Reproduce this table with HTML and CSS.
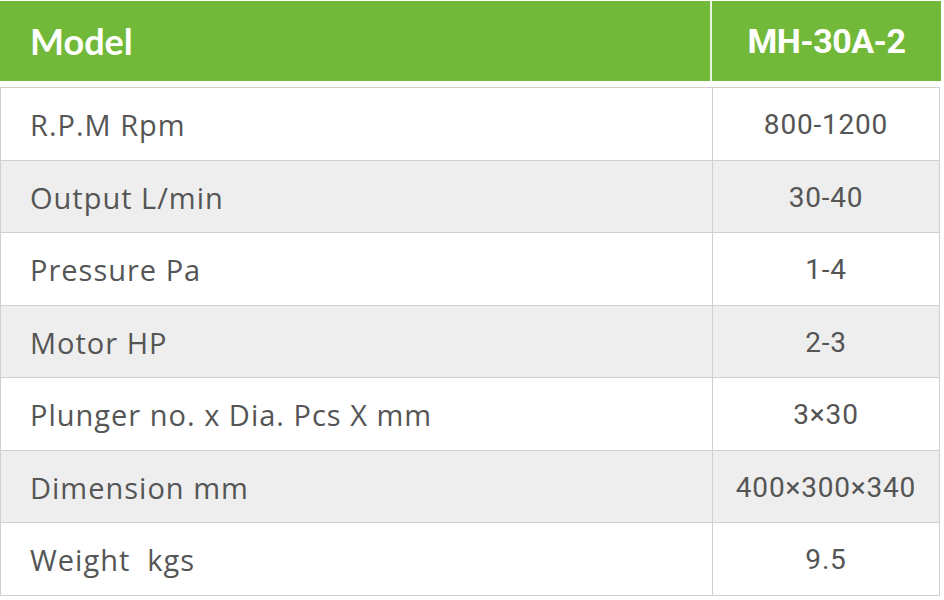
FILE: index.html
```html
<!DOCTYPE html>
<html>
<head>
<meta charset="utf-8">
<link rel="stylesheet" href="styles.css">
</head>
<body>
<div class="spec">
  <div class="head">
    <div class="head-label">Model</div>
    <div class="head-value">MH-30A-2</div>
  </div>
  <table class="grid">
    <tr><td class="label">R.P.M Rpm</td><td class="value">800-1200</td></tr>
    <tr class="alt"><td class="label">Output L/min</td><td class="value">30-40</td></tr>
    <tr><td class="label">Pressure Pa</td><td class="value">1-4</td></tr>
    <tr class="alt"><td class="label">Motor HP</td><td class="value">2-3</td></tr>
    <tr><td class="label">Plunger no. x Dia. Pcs X mm</td><td class="value">3×30</td></tr>
    <tr class="alt"><td class="label">Dimension mm</td><td class="value">400×300×340</td></tr>
    <tr><td class="label">Weight&nbsp; kgs</td><td class="value">9.5</td></tr>
  </table>
</div>
</body>
</html>
```
FILE: styles.css
```css
html, body {
  margin: 0;
  padding: 0;
  background: #ffffff;
}
.spec {
  width: 941px;
  padding-top: 1px;
}
.head {
  display: flex;
  height: 80px;
  background: #72b93a;
}
.head-label {
  width: 712px;
  box-sizing: border-box;
  padding-left: 30px;
  display: flex;
  align-items: center;
  color: #ffffff;
  font-family: "Lato", sans-serif;
  font-weight: 700;
  font-size: 36px;
  border-right: 2px solid #e9f3e0;
}
.head-value {
  flex: 1;
  display: flex;
  align-items: center;
  justify-content: center;
  color: #ffffff;
  font-family: "Roboto", sans-serif;
  font-weight: 700;
  font-size: 34px;
  letter-spacing: -0.5px;
}
.grid {
  margin-top: 6px;
  width: 940px;
  border-collapse: collapse;
}
.grid td {
  height: 69.5px;
  padding: 2px 0 0 0;
  border: 1px solid #cfcfcf;
  color: #555555;
}
.grid tr.alt td {
  background: #eeeeee;
}
.label {
  width: 682px;
  padding-left: 29px !important;
  font-family: "Open Sans", sans-serif;
  font-size: 29px;
  letter-spacing: 1px;
}
.value {
  text-align: center;
  font-family: "Roboto", sans-serif;
  font-size: 28px;
  letter-spacing: 0.8px;
}
```
